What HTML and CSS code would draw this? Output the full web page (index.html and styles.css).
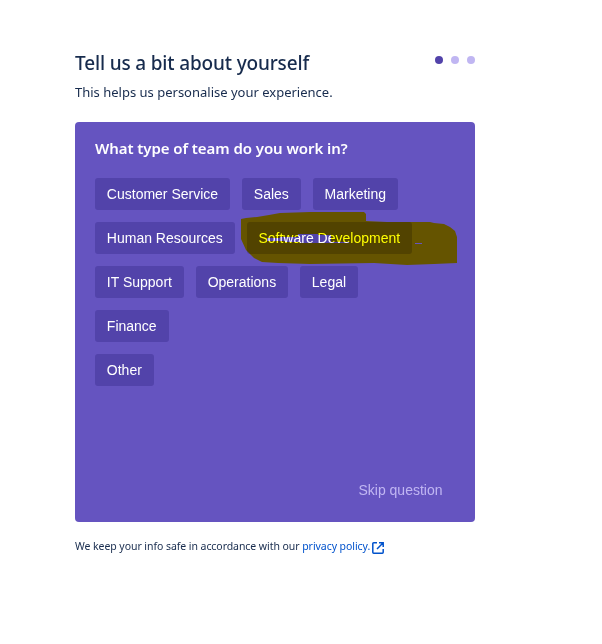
FILE: index.html
```html
<!DOCTYPE html>
<html lang="en">
<head>
<meta charset="utf-8">
<title>Tell us a bit about yourself</title>
<link rel="stylesheet" href="styles.css">
</head>
<body>
<main class="page">
  <header class="header">
    <h1 class="title">Tell us a bit about yourself</h1>
    <div class="dots"><span class="dot active"></span><span class="dot"></span><span class="dot"></span></div>
  </header>
  <p class="subtitle">This helps us personalise your experience.</p>
  <section class="card">
    <h2 class="question">What type of team do you work in?</h2>
    <div class="options">
      <div class="row"><button class="chip">Customer Service</button><button class="chip">Sales</button><button class="chip">Marketing</button></div>
      <div class="row"><button class="chip">Human Resources</button><button class="chip">Software Development</button></div>
      <div class="row"><button class="chip">IT Support</button><button class="chip">Operations</button><button class="chip">Legal</button></div>
      <div class="row"><button class="chip">Finance</button></div>
      <div class="row"><button class="chip">Other</button></div>
    </div>
    <button class="skip">Skip question</button>
    <svg class="marker" viewBox="241 211 217 55" width="217" height="55" aria-hidden="true">
      <path fill="#ff0" fill-rule="evenodd" d="M241 219L246 218L257 217L269 215L280 213L310 212L364 212L366 214V221L387 222L430 222L434 223L444 224L450 227L455 231L457 237V263L434 264L407 265L374 263L310 264L278 263L262 262L254 258L246 250L241 239ZM267 238H280V237H298V234H318V235H331V242H349V243H300V242H285V241H267ZM415 243H422V244H415Z"/>
    </svg>
  </section>
  <footer class="footer">
    <span class="note">We keep your info safe in accordance with our <a class="link">privacy policy.</a></span>
    <svg class="external" viewBox="0 0 12 12" width="12" height="12" fill="none" stroke="#0052cc" stroke-width="1.5"><path d="M5 .8H1.7Q.8.8.8 1.7v8.6q0 .9.9.9h8.6q.9 0 .9-.9V7M7 .8h4.2V5M11.2.8L5 7"/></svg>
  </footer>
</main>
</body>
</html>
```
FILE: styles.css
```css
* { box-sizing: border-box; }
body { margin: 0; background: #fff; color: #172b4d; font-family: "Noto Sans", sans-serif; }
.page { width: 400px; margin: 50px 0 0 75px; }
.header { display: flex; justify-content: space-between; height: 26px; }
.title { margin: 0; font-size: 19px; line-height: 26px; font-weight: 500; letter-spacing: -0.16px; white-space: nowrap; }
.dots { display: flex; gap: 8px; padding-top: 6px; }
.dot { width: 8px; height: 8px; border-radius: 50%; background: #c0b6f2; }
.dot.active { background: #5243aa; }
.subtitle { margin: 6px 0 0; font-size: 13px; line-height: 20px; height: 40px; white-space: nowrap; }
.card { position: relative; display: flex; flex-direction: column; height: 400px; padding: 15px 20px 16px; border-radius: 4px; background: #6554c0; color: #fff; }
.question { margin: 0; font-size: 15px; line-height: 22px; font-weight: 600; letter-spacing: -0.07px; white-space: nowrap; }
.options { display: flex; flex-direction: column; gap: 12px; margin-top: 19px; }
.row { display: flex; gap: 12px; }
.chip { height: 32px; padding: 0 11.85px; border: 0; border-radius: 3px; background: #5243aa; color: #fff; font: 14px/32px "Liberation Sans", Arial, sans-serif; white-space: nowrap; }
.skip { align-self: flex-end; margin: auto 0 0; padding: 0 12.5px; border: 0; background: none; color: #c0b6f2; font: 14px/32px "Liberation Sans", Arial, sans-serif; }
.marker { position: absolute; left: 166px; top: 89px; mix-blend-mode: multiply; pointer-events: none; }
.footer { display: flex; align-items: center; margin-top: 14px; height: 20px; gap: 2px; }
.note { width: 295px; font-size: 10.5px; line-height: 20px; letter-spacing: -0.06px; white-space: nowrap; }
.link { color: #0052cc; }
.external { margin-top: 4px; }
```
